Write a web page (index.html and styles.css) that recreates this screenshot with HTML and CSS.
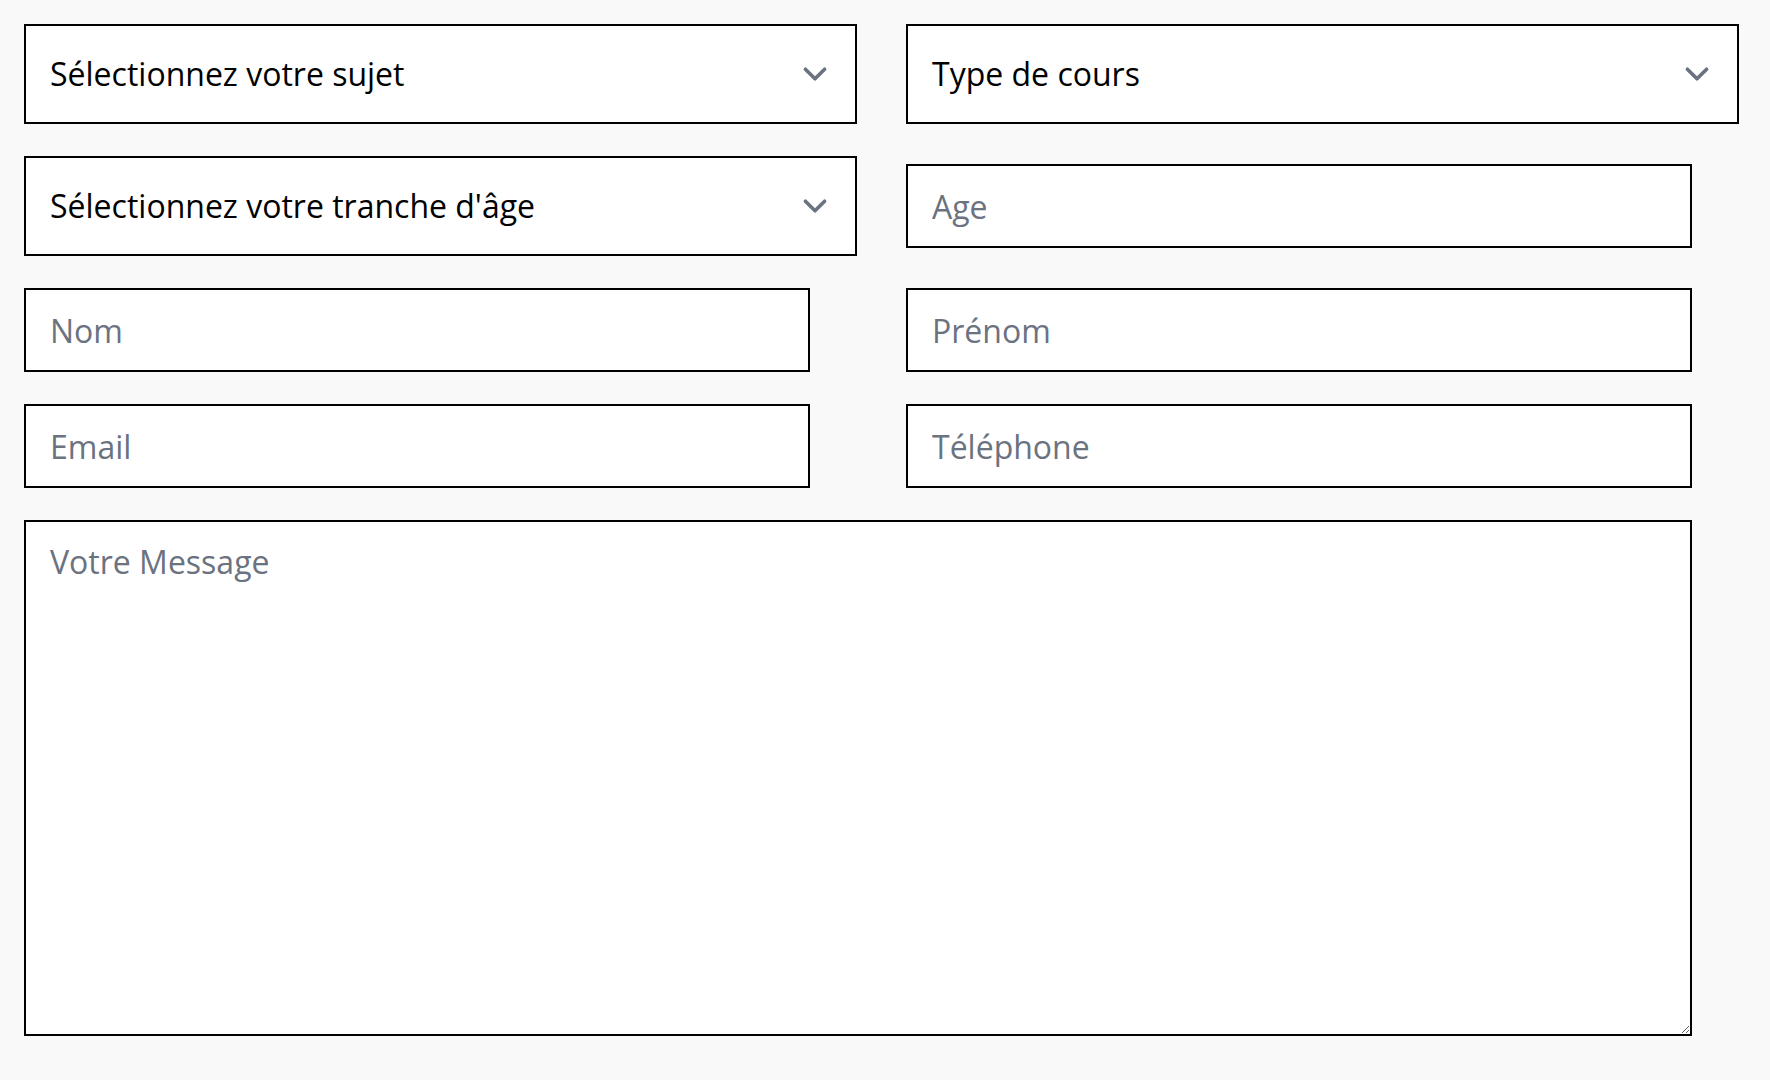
FILE: index.html
```html
<!DOCTYPE html>
<html lang="fr">
<head>
<meta charset="utf-8">
<title>Formulaire</title>
<link rel="stylesheet" href="styles.css">
</head>
<body>
<form class="form">
  <div class="select">
    <span class="select-label">Sélectionnez votre sujet</span>
    <svg class="chevron" viewBox="0 0 20 20" width="48" height="48" fill="none"><path stroke="#6b7280" stroke-linecap="round" stroke-linejoin="round" stroke-width="1.5" d="M6 8l4 4 4-4"/></svg>
  </div>
  <div class="select">
    <span class="select-label">Type de cours</span>
    <svg class="chevron" viewBox="0 0 20 20" width="48" height="48" fill="none"><path stroke="#6b7280" stroke-linecap="round" stroke-linejoin="round" stroke-width="1.5" d="M6 8l4 4 4-4"/></svg>
  </div>
  <div class="select">
    <span class="select-label">Sélectionnez votre tranche d'âge</span>
    <svg class="chevron" viewBox="0 0 20 20" width="48" height="48" fill="none"><path stroke="#6b7280" stroke-linecap="round" stroke-linejoin="round" stroke-width="1.5" d="M6 8l4 4 4-4"/></svg>
  </div>
  <input class="field" type="text" placeholder="Age">
  <input class="field" type="text" placeholder="Nom">
  <input class="field" type="text" placeholder="Prénom">
  <input class="field" type="email" placeholder="Email">
  <input class="field" type="tel" placeholder="Téléphone">
  <textarea class="message" rows="10" placeholder="Votre Message"></textarea>
</form>
</body>
</html>
```

FILE: styles.css
```css
html, body {
  margin: 0;
  padding: 0;
  background: #f9f9f9;
}

body {
  font-family: "Open Sans", "Noto Sans", sans-serif;
  min-height: 1080px;
}

.form {
  display: grid;
  grid-template-columns: 1fr 1fr;
  column-gap: 49px;
  row-gap: 32px;
  align-items: center;
  width: 1715px;
  margin: 0 0 0 24px;
  padding-top: 24px;
}

.select {
  box-sizing: border-box;
  height: 100px;
  display: flex;
  align-items: center;
  justify-content: space-between;
  padding: 0 16px 0 24px;
  background: #fff;
  border: 2px solid #000;
  font-size: 32px;
  line-height: 48px;
  color: #000;
}

.chevron {
  display: block;
  flex: none;
}

.field,
.message {
  box-sizing: border-box;
  display: block;
  margin: 0;
  padding: 16px 24px;
  border: 2px solid #000;
  border-radius: 0;
  background: #fff;
  font-family: "Open Sans", "Noto Sans", sans-serif;
  font-size: 32px;
  line-height: 48px;
  color: #000;
  outline: none;
}

.field {
  width: calc(100% - 47px);
  height: 84px;
}

.message {
  grid-column: 1 / span 2;
  width: calc(100% - 47px);
  height: 516px;
  resize: both;
}

.field::placeholder,
.message::placeholder {
  color: #6b7280;
  opacity: 1;
}
```
